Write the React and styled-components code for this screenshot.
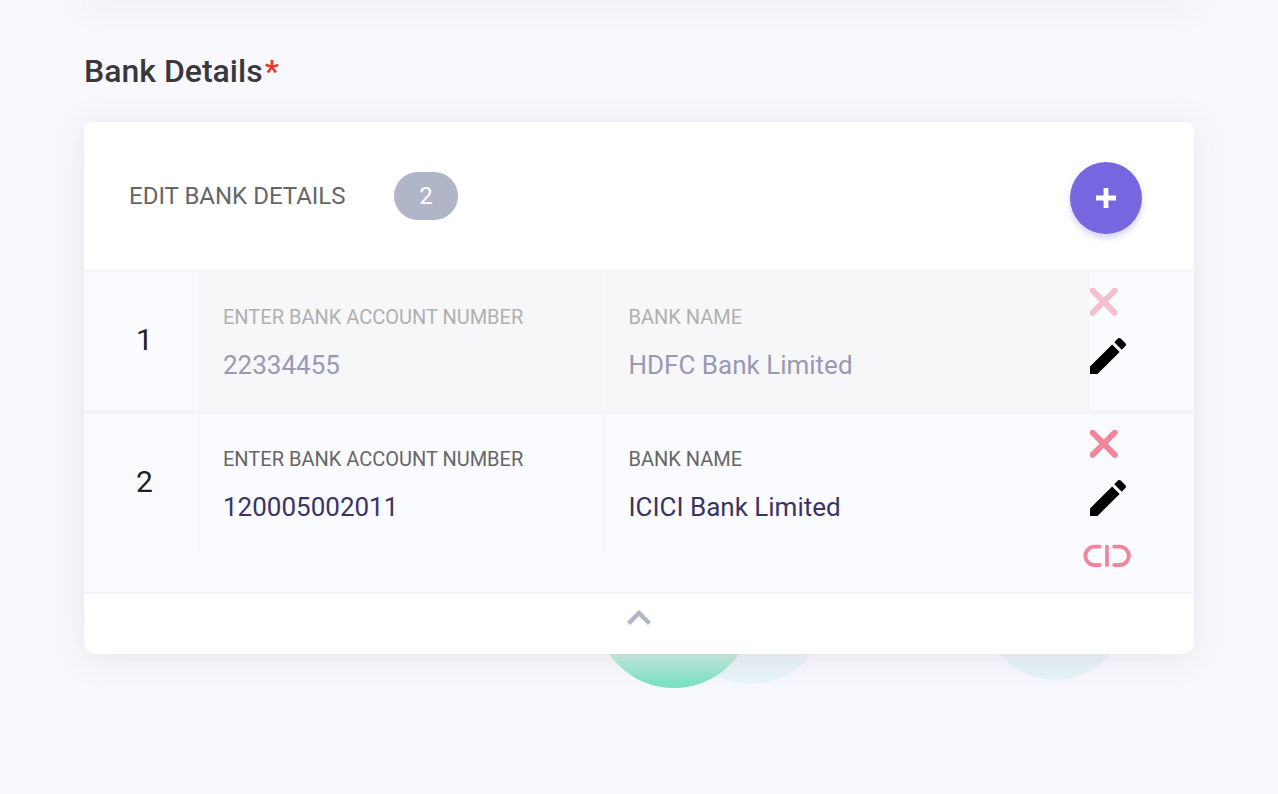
import React, { useState } from 'react';
import styled, { createGlobalStyle } from 'styled-components';

const GlobalStyle = createGlobalStyle`
* { box-sizing: border-box; }
body {
  margin: 0;
  background: #f8f9fe;
  font-family: Roboto, "Liberation Sans", sans-serif;
}
`;

const Page = styled.main`
position: relative;
z-index: 0;
min-height: 100vh;
padding: 0 84px 140px;
overflow: hidden;
`;

const PreviousCard = styled.div`
box-shadow: 0 0 32px 4px rgba(60, 40, 60, 0.14);
`;

const Title = styled.h1`
margin: 0;
padding: 51px 0 31px;
color: #3a383f;
font-size: 32px;
font-weight: 500;
line-height: 40px;
`;

const Required = styled.span`
margin-left: 2px;
color: #ee3124;
`;

const CardArea = styled.div`
position: relative;
`;

const Blob = styled.span`
position: absolute;
z-index: -1;
border-radius: 50%;
`;

const MintBlob = styled(Blob)`
left: 46%;
bottom: -34px;
width: 158px;
height: 158px;
background: linear-gradient(#d6f0e8 76%, #7ce2c4 97%);
`;

const PaleBlob = styled(Blob)`
left: ${(p) => p.$left};
bottom: ${(p) => p.$bottom};
width: ${(p) => p.$size};
height: ${(p) => p.$size};
background: linear-gradient(#f0f4fa 76%, #e6f5f7 97%);
`;

const Card = styled.section`
background: #fff;
border-radius: 8px 8px 12px 12px;
box-shadow: 0 -2px 0 #f0f1fd, 0 4px 36px rgba(60, 40, 60, 0.1);
`;

const CardHeader = styled.header`
display: flex;
justify-content: space-between;
align-items: flex-start;
padding: 40px 52px 36px 45px;
border-bottom: 2px solid #f4f5fd;
`;

const HeaderLabel = styled.div`
display: flex;
align-items: center;
height: 68px;
`;

const HeaderTitle = styled.h2`
margin: 0;
width: 265px;
color: #666;
font-size: 24px;
font-weight: 400;
line-height: 32px;
`;

const Count = styled.span`
width: 64px;
border-radius: 24px;
background: #b0b5c8;
color: #fff;
font-size: 24px;
line-height: 48px;
text-align: center;
`;

const PlainButton = styled.button`
display: flex;
padding: 0;
border: 0;
background: none;
cursor: pointer;
`;

const AddButton = styled(PlainButton)`
align-items: center;
justify-content: center;
width: 72px;
height: 72px;
border-radius: 50%;
background: #7666e0;
box-shadow: 0 4px 6px rgba(118, 102, 224, 0.3);
`;

const Row = styled.div`
display: grid;
grid-template-columns: 114px 5fr 6fr 104px;
align-items: start;
background: #fafbff;
border-bottom: ${(p) => (p.$last ? '2px' : '4px')} solid #f4f5fc;
`;

const RowNumber = styled.div`
padding-left: 52px;
color: #212121;
font-size: 30px;
line-height: 136px;
`;

const Cell = styled.div`
min-width: 0;
height: 138px;
padding: 32px 24px 0 23px;
border-left: 2px solid ${(p) => (p.$disabled ? '#f8f9fb' : '#f5f6fd')};
background: ${(p) => (p.$disabled ? '#f6f7f9' : 'transparent')};
`;

const Label = styled.label`
display: block;
color: ${(p) => (p.$disabled ? '#b0b0b1' : '#666')};
font-size: 20px;
line-height: 26px;
text-transform: uppercase;
`;

const Input = styled.input`
display: block;
width: 100%;
height: 40px;
margin-top: 16px;
padding: 0 0 2px;
border: 0;
outline: 0;
background: none;
color: #3b3363;
font-family: inherit;
font-size: 26px;
&:disabled {
  color: #9b98b3;
}
`;

const Actions = styled.div`
display: flex;
flex-direction: column;
align-items: flex-start;
gap: 22px;
padding: 16px 0 24px;
`;

const RemoveButton = styled(PlainButton)`
opacity: ${(p) => (p.disabled ? 0.5 : 1)};
`;

const UnlinkButton = styled(PlainButton)`
margin: 6px 0 0 -7px;
`;

const Toggle = styled(PlainButton)`
justify-content: center;
width: 100%;
padding: 16px 0 28px;
`;

const CrossIcon = () => (
  <svg width="28" height="28" viewBox="0 0 28 28" fill="none" stroke="#f0869c" strokeWidth="6" strokeLinecap="round">
    <path d="M2.5 2.5 24.8 24.8M24.8 2.5 2.5 24.8" />
  </svg>
);

const PencilIcon = () => (
  <svg width="36" height="36" viewBox="3 3 18 18" fill="#000">
    <path d="M3 17.25V21h3.75L17.81 9.94l-3.75-3.75L3 17.25zM20.71 7.04c.39-.39.39-1.02 0-1.41l-2.34-2.34c-.39-.39-1.02-.39-1.41 0l-1.83 1.83 3.75 3.75 1.83-1.83z" />
  </svg>
);

const UnlinkIcon = () => (
  <svg width="48" height="24" viewBox="0 0 48 24" fill="none" stroke="#f0869c" strokeWidth="3.8" strokeLinecap="round">
    <path d="M16.8 2.6H11.6A9.2 9.2 0 0 0 11.6 21H16.8M24 2.6V21M31.2 2.6H36.6A9.2 9.2 0 0 1 36.6 21H31.2" />
  </svg>
);

const accounts = [
  { id: 1, number: '22334455', bank: 'HDFC Bank Limited', disabled: true },
  { id: 2, number: '120005002011', bank: 'ICICI Bank Limited', disabled: false },
];

function AccountRow({ account, last }) {
  const { id, number, bank, disabled } = account;
  return (
    <Row $last={last}>
      <RowNumber>{id}</RowNumber>
      <Cell $disabled={disabled}>
        <Label htmlFor={`number-${id}`} $disabled={disabled}>Enter bank account number</Label>
        <Input id={`number-${id}`} defaultValue={number} disabled={disabled} />
      </Cell>
      <Cell $disabled={disabled}>
        <Label htmlFor={`bank-${id}`} $disabled={disabled}>Bank name</Label>
        <Input id={`bank-${id}`} defaultValue={bank} disabled={disabled} />
      </Cell>
      <Actions>
        <RemoveButton type="button" aria-label="Remove" disabled={disabled}><CrossIcon /></RemoveButton>
        <PlainButton type="button" aria-label="Edit"><PencilIcon /></PlainButton>
        {!disabled && (
          <UnlinkButton type="button" aria-label="Unlink"><UnlinkIcon /></UnlinkButton>
        )}
      </Actions>
    </Row>
  );
}

export default function App() {
  const [open, setOpen] = useState(true);
  return (
    <Page>
      <GlobalStyle />
      <PreviousCard />
      <Title>Bank Details<Required>*</Required></Title>
      <CardArea>
        <PaleBlob $left="53%" $bottom="-30px" $size="156px" />
        <MintBlob />
        <PaleBlob $left="81%" $bottom="-26px" $size="144px" />
        <Card>
          <CardHeader>
            <HeaderLabel>
              <HeaderTitle>EDIT BANK DETAILS</HeaderTitle>
              <Count>{accounts.length}</Count>
            </HeaderLabel>
            <AddButton type="button" aria-label="Add bank">
              <svg width="20" height="20" viewBox="0 0 20 20" stroke="#fff" strokeWidth="4.8">
                <path d="M10 0V20M0 10H20" />
              </svg>
            </AddButton>
          </CardHeader>
          {open && accounts.map((account, i) => (
            <AccountRow key={account.id} account={account} last={i === accounts.length - 1} />
          ))}
          <Toggle type="button" aria-label="Toggle bank list" aria-expanded={open} onClick={() => setOpen(!open)}>
            <svg width="24" height="16" viewBox="0 0 24 16" fill="none" stroke="#b0b5c8" strokeWidth="4.4">
              <path d="M1.5 13.5 12 3 22.5 13.5" />
            </svg>
          </Toggle>
        </Card>
      </CardArea>
    </Page>
  );
}
